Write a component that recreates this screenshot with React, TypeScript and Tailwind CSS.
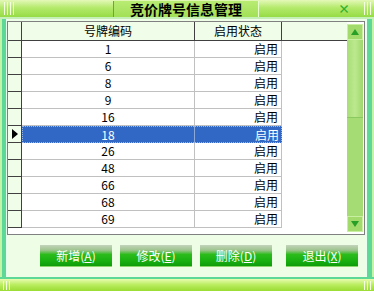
import React from "react";

const rows = ["1", "6", "8", "9", "16", "18", "26", "48", "66", "68", "69"];
const selected = "18";

function Btn({ label, hot }: { label: string; hot: string }) {
  return (
    <button className="h-[22px] w-[72px] flex items-center justify-center text-[12px] text-white bg-[linear-gradient(#c4d4bc_0%,#9cc48c_25%,#2cbc1c_45%,#18b010_75%,#0e9c0a_100%)] border-b border-[#8ad86a]">
      {label}(<span className="underline">{hot}</span>)
    </button>
  );
}

export default function App() {
  return (
    <div
      className="w-[374px] h-[291px] flex flex-col bg-[#eefde6] overflow-hidden"
      style={{ fontFamily: '"Noto Sans CJK SC", "Liberation Sans", sans-serif' }}
    >
      {/* title bar */}
      <div className="h-[19px] flex items-center bg-[linear-gradient(#e4f8b8,#b4ea6c_45%,#96dc44)] border-b-2 border-[#c4f0b8] relative">
        <div className="ml-[4px] flex gap-[2px] h-[13px]">
          <span className="w-px bg-[#f4ffe0]" />
          <span className="w-px bg-[#f4ffe0]" />
          <span className="w-px bg-[#f4ffe0]" />
          <span className="w-px bg-[#f4ffe0]" />
        </div>
        <div className="absolute left-[113px] top-[1px] w-[146px] h-[16px] flex items-center justify-center bg-[linear-gradient(#b8ec74,#a2e056)] border-l border-l-[#6aa830] border-r border-r-[#e8ffd0]">
          <span className="text-[14px] font-bold text-black leading-none">竞价牌号信息管理</span>
        </div>
        <span className="ml-auto mr-[14px] text-[12px] font-bold text-[#30b030] leading-none">×</span>
        <div className="mr-[3px] flex gap-[2px] h-[13px]">
          <span className="w-px bg-[#f4ffe0]" />
          <span className="w-px bg-[#f4ffe0]" />
          <span className="w-px bg-[#f4ffe0]" />
        </div>
      </div>

      <div className="flex-1 flex">
        {/* left border */}
        <div className="w-[7px] flex">
          <span className="w-[2px] bg-[#c4f4a8]" />
          <span className="w-[4px] bg-[#5ed896]" />
          <span className="w-px bg-[#e8fff0]" />
        </div>

        <div className="flex-1 flex flex-col">
          {/* grid */}
          <div className="mt-[2px] h-[214px] flex bg-white border border-[#808080]">
            <div className="w-[339px] flex flex-col">
              <div className="h-[19px] flex bg-[#f0fde8] border-b border-[#404040]">
                <div className="w-[14px] border-r border-[#404040]" />
                <div className="w-[173px] flex items-center justify-center text-[12px] text-black border-r border-[#404040]">号牌编码</div>
                <div className="w-[87px] flex items-center justify-center text-[12px] text-black border-r border-[#404040]">启用状态</div>
              </div>
              {rows.map((r) => {
                const sel = r === selected;
                return (
                  <div key={r} className="h-[17px] flex">
                    <div className="w-[14px] flex items-center justify-center bg-[#f0fde8] border-r border-b border-[#404040]">
                      {sel && <span className="w-0 h-0 border-y-[5px] border-y-transparent border-l-[6px] border-l-black ml-[1px]" />}
                    </div>
                    {sel ? (
                      <div className="w-[260px] flex bg-[#3168c6] outline-1 outline-dotted outline-[#a0b8e0] -outline-offset-1 text-white">
                        <div className="w-[173px] flex items-center justify-center text-[12px] border-r border-[#8aa8d8]">{r}</div>
                        <div className="w-[87px] flex items-center justify-end pr-[3px] text-[12px]">启用</div>
                      </div>
                    ) : (
                      <>
                        <div className="w-[173px] flex items-center justify-center text-[12px] text-black border-r border-b border-[#c0c0c0]">{r}</div>
                        <div className="w-[87px] flex items-center justify-end pr-[3px] text-[12px] text-black border-r border-b border-[#c0c0c0]">启用</div>
                      </>
                    )}
                  </div>
                );
              })}
            </div>
            {/* scrollbar */}
            <div className="ml-auto w-[16px] my-[2px] mr-[1px] flex flex-col bg-[#a6dc74]">
              <div className="h-[16px] flex items-center justify-center bg-[#a2da6c] border border-[#c8f0a0]">
                <span className="w-0 h-0 border-x-[4px] border-x-transparent border-b-[6px] border-b-[#28a028]" />
              </div>
              <div className="h-[78px] bg-[linear-gradient(90deg,#a8de78,#bce88e_50%,#a0d86c)] border-b border-[#8cc860]" />
              <div className="flex-1" />
              <div className="h-[16px] flex items-center justify-center bg-[#a2da6c] border border-[#c8f0a0]">
                <span className="w-0 h-0 border-x-[4px] border-x-transparent border-t-[6px] border-t-[#28a028]" />
              </div>
            </div>
          </div>

          {/* buttons */}
          <div className="mt-[10px] flex">
            <div className="ml-[33px] flex gap-[8px]">
              <Btn label="新增" hot="A" />
              <Btn label="修改" hot="E" />
              <Btn label="删除" hot="D" />
            </div>
            <div className="ml-[14px]">
              <Btn label="退出" hot="X" />
            </div>
          </div>
          <div className="flex-1" />
        </div>

        {/* right border */}
        <div className="w-[9px] flex">
          <span className="w-[2px] bg-[#e8fff0]" />
          <span className="w-[5px] bg-[#5ed896]" />
          <span className="w-[2px] bg-[#c4f4a8]" />
        </div>
      </div>

      {/* bottom bar */}
      <div className="h-[2px] bg-[#5ed896]" />
      <div className="h-[12px] flex items-center bg-[linear-gradient(#e8fcb0,#b8ec5c_50%,#9adc34)]">
        <div className="ml-[3px] flex gap-[2px] h-[9px]">
          <span className="w-px bg-[#f4ffe0]" />
          <span className="w-px bg-[#f4ffe0]" />
          <span className="w-px bg-[#f4ffe0]" />
        </div>
        <div className="ml-auto mr-[3px] flex gap-[2px] h-[9px]">
          <span className="w-px bg-[#f4ffe0]" />
          <span className="w-px bg-[#f4ffe0]" />
          <span className="w-px bg-[#f4ffe0]" />
        </div>
      </div>
    </div>
  );
}
